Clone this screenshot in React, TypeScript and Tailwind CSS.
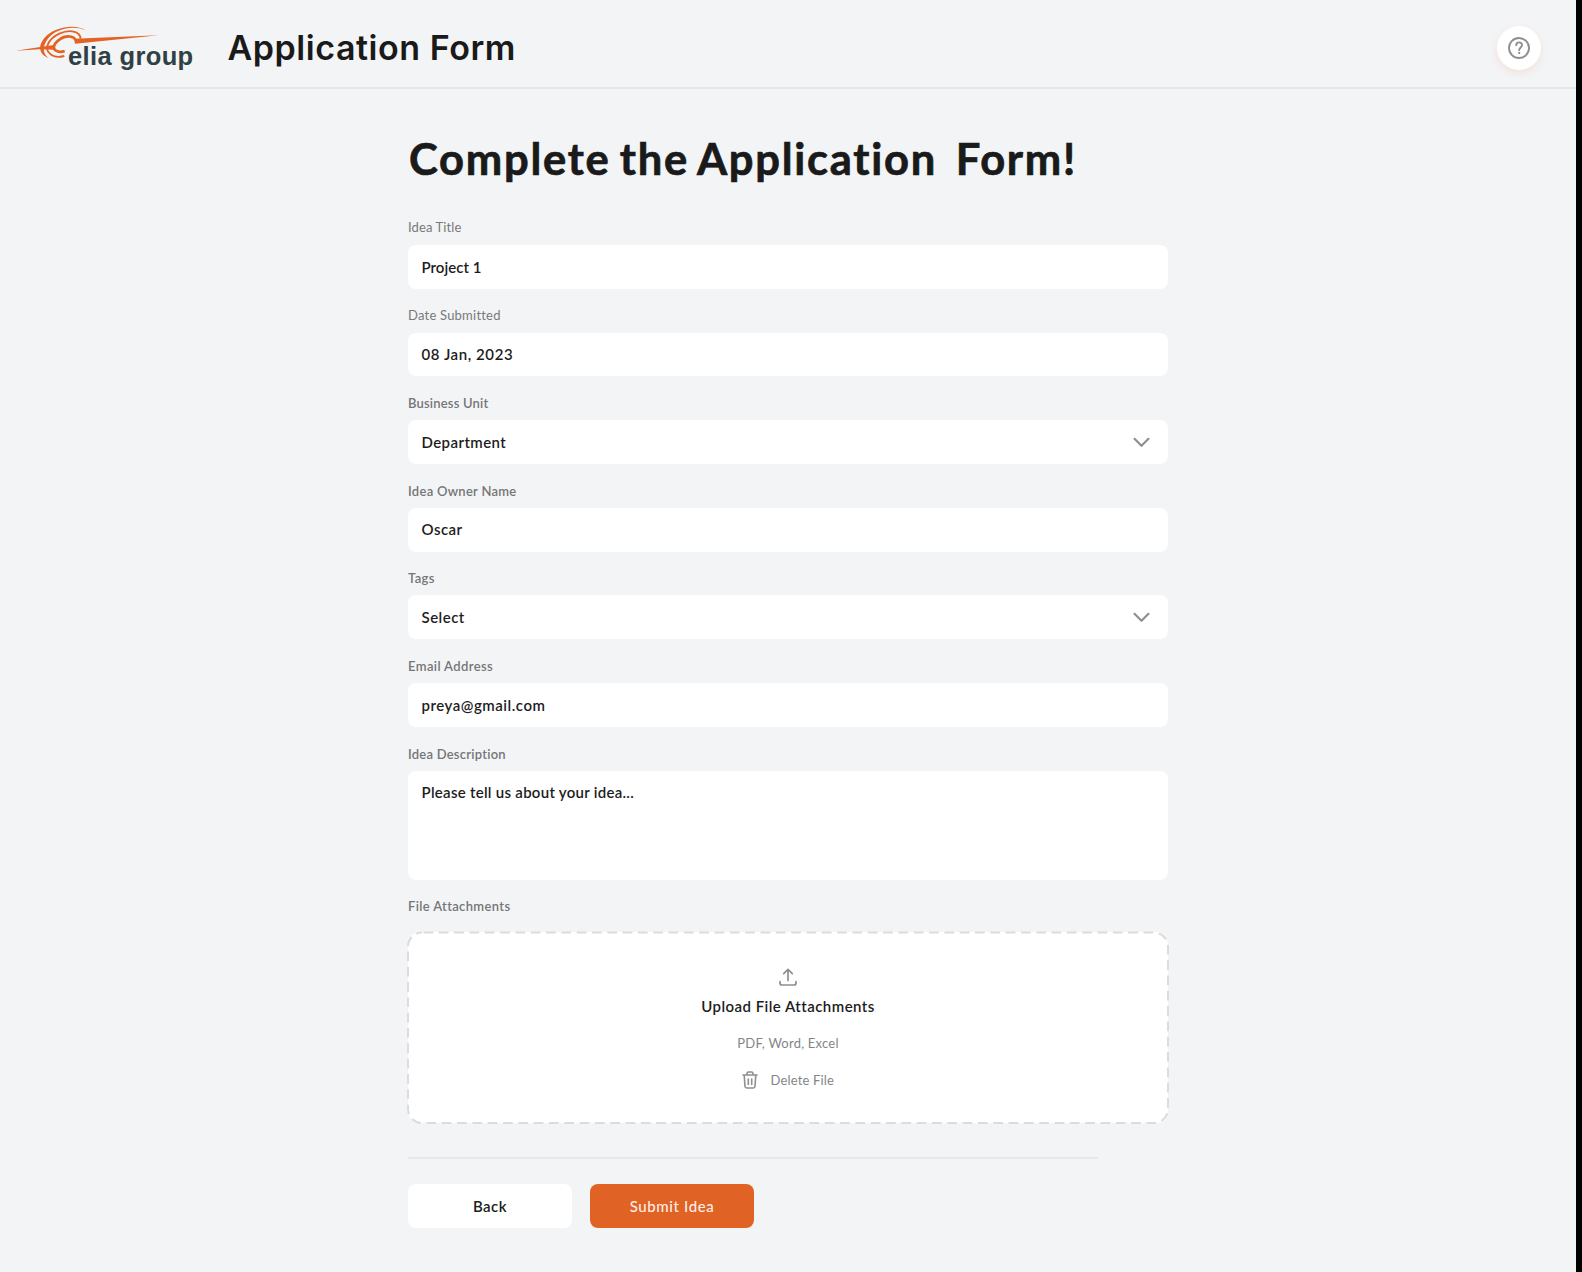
import type { ReactNode } from "react";

function Logo() {
  return (
    <svg className="absolute inset-0 h-full w-full" viewBox="45 72 540 144" fill="none">
      <g fill="#e36224">
        <path d="M46 152.500 L166 134 L163 149 L118 148 Z" />
        <path d="M222 116 L476 105.500 L225 131.500 Z" />
        <path d="M257 91 C228 70 160 80 133 114 C110 142 121 166 146 174 C128 161 126 141 143 117 C166 87 218 74 257 91 Z" />
      </g>
      <path d="M242 116 C240 92 208 88 178 101 C146 116 131 145 149 160 C160 171 178 172 193 168" stroke="#e36224" strokeWidth="5.500" />
      <path d="M226 120 C222 106 195 106 178 119 C160 132 157 146 168 152 C176 157 185 156 194 153" stroke="#e36224" strokeWidth="8" />
    </svg>
  );
}

function Chevron() {
  return (
    <svg className="h-4 w-6" viewBox="0 0 24 16" fill="none" stroke="#8f8f8f" strokeWidth="2.200" strokeLinecap="round" strokeLinejoin="round">
      <path d="M4.500 4.800 L11.500 11.800 L18.500 4.800" />
    </svg>
  );
}

function HelpIcon() {
  return (
    <svg className="size-[22px]" viewBox="0 0 22 22" fill="none" stroke="#8f8f8f" strokeWidth="1.900">
      <circle cx="11" cy="11" r="10" />
      <path d="M8.200 8.300 C8.200 4.400 14 4.400 14 8 C14 10.600 11.200 10.400 11.200 13.200" strokeLinecap="round" />
      <path d="M11.200 15 V17" />
    </svg>
  );
}

function UploadIcon() {
  return (
    <svg className="h-[18px] w-[18px]" viewBox="0 0 18 18" fill="none" stroke="#8f8f8f" strokeWidth="1.700" strokeLinecap="round" strokeLinejoin="round">
      <path d="M9 12.500 V1.500 M4.700 5.700 L9 1.400 L13.300 5.700" />
      <path d="M1 13.500 V15 Q1 17 3 17 H15 Q17 17 17 15 V13.500" />
    </svg>
  );
}

function TrashIcon() {
  return (
    <svg className="h-[18px] w-4" viewBox="0 0 16 18" fill="none" stroke="#8f8f8f" strokeWidth="1.600" strokeLinecap="round" strokeLinejoin="round">
      <path d="M1 4 H15 M2.200 4 L3 15.300 Q3.100 17 4.700 17 H11.300 Q12.900 17 13 15.300 L13.800 4 M5 4 V2.500 Q5 1 6.500 1 H9.500 Q11 1 11 2.500 V4" />
      <path d="M6.300 8 V13.500 M9.700 8 V13.500" />
    </svg>
  );
}

function Label({ children, bold }: { children: ReactNode; bold?: boolean }) {
  return (
    <div className={bold ? "h-6 text-[13px] leading-[14px] font-semibold text-[#747677]" : "h-6 text-[13px] leading-[13px] text-[#77797a]"}>
      {children}
    </div>
  );
}

type FieldProps = { label: string; labelClass: string; value: string; valueClass: string; bold?: boolean; select?: boolean };

function Field({ label, labelClass, value, valueClass, bold, select }: FieldProps) {
  return (
    <div className="mb-[19.800px]">
      <Label bold={bold}>
        <span className={labelClass}>{label}</span>
      </Label>
      <div className="flex h-[43.800px] items-center justify-between rounded-lg bg-white pr-[14px] pl-[13.500px] text-[15px] font-semibold text-[#1d1d1d]">
        <span className={valueClass}>{value}</span>
        {select && <Chevron />}
      </div>
    </div>
  );
}

const fields: FieldProps[] = [
  { label: "Idea Title", labelClass: "tracking-[0.12px]", value: "Project 1", valueClass: "tracking-[0.03px]" },
  { label: "Date Submitted", labelClass: "tracking-[0.22px]", value: "08 Jan, 2023", valueClass: "tracking-[0.58px]" },
  { label: "Business Unit", labelClass: "tracking-[0.18px]", value: "Department", valueClass: "tracking-[0.42px]", bold: true, select: true },
  { label: "Idea Owner Name", labelClass: "tracking-[0.28px]", value: "Oscar", valueClass: "tracking-[0.45px]", bold: true },
  { label: "Tags", labelClass: "tracking-[0.350px]", value: "Select", valueClass: "tracking-[0.48px]", bold: true, select: true },
  { label: "Email Address", labelClass: "tracking-[0.380px]", value: "preya@gmail.com", valueClass: "tracking-[0.52px]", bold: true },
];

export default function App() {
  return (
    <div className="h-[1272px] w-[1582px] overflow-hidden border-r-[6px] border-black bg-[#f3f4f6] font-['Lato',sans-serif] text-[#1a1a1a] [font-variant-ligatures:none]">
      <header className="flex h-[89px] items-center border-b-2 border-[#e6e7e9] pt-[9px]">
        <div className="relative ml-[15px] h-12 w-[180px]">
          <Logo />
          <div className="absolute top-[18px] left-[53px] text-[25.500px] leading-7 font-bold tracking-[0.370px] whitespace-nowrap text-[#2f4144] font-['Liberation_Sans',sans-serif]">elia group</div>
        </div>
        <h1 className="ml-[32.500px] pb-px text-[34px] font-semibold tracking-[0.55px] font-['Inter',sans-serif]">Application Form</h1>
        <div className="mr-[35px] ml-auto flex size-11 items-center justify-center rounded-full bg-white shadow-[0_3px_8px_rgba(227,98,36,0.12)]">
          <HelpIcon />
        </div>
      </header>
      <main className="ml-[408px] w-[760px]">
        <h2 className="h-[132px] pt-[42px] pl-px text-[43.500px] leading-[54px] font-bold tracking-[1.750px] whitespace-pre [word-spacing:-3px] [-webkit-text-stroke:0.7px_#1a1a1a]">Complete the Application  Form!</h2>
        {fields.map((f) => (
          <Field key={f.label} {...f} />
        ))}
        <Label bold>
          <span className="tracking-[0.230px]">Idea Description</span>
        </Label>
        <div className="mb-[19.800px] h-[109px] rounded-lg bg-white pt-[12px] pl-[13.500px] text-[15px] leading-[18px] font-semibold text-[#1d1d1d]">
          <span className="tracking-[0.280px]">Please tell us about your idea...</span>
        </div>
        <Label bold>
          <span className="tracking-[0.350px]">File Attachments</span>
        </Label>
        <div className="relative mt-[9px] flex h-[191px] flex-col items-center rounded-xl bg-white pt-[35.500px]">
          <svg className="absolute -top-px -left-px h-[193px] w-[762px]" viewBox="0 0 762 193" fill="none" stroke="#dcdcdc" strokeWidth="2">
            <rect x="1" y="1.500" width="760" height="190.500" rx="14" strokeDasharray="9.700 5.620" strokeDashoffset="-1.500" />
          </svg>
          <UploadIcon />
          <div className="mt-[10px] text-[15px] leading-5 font-semibold tracking-[0.460px] text-[#1d1d1d]">Upload File Attachments</div>
          <div className="mt-[17px] text-[13px] leading-5 tracking-[0.220px] text-[#858585]">PDF, Word, Excel</div>
          <div className="mt-[17px] flex items-center gap-[12.500px] text-[13px] leading-5 tracking-[0.150px] text-[#858585]">
            <TrashIcon />
            <span>Delete File</span>
          </div>
        </div>
        <div className="mt-[34px] h-0.5 w-[690px] bg-[#e6e7e9]" />
        <div className="mt-[24.500px] flex gap-[18px] text-[15px] font-semibold tracking-[0.500px]">
          <button className="h-[43.800px] w-[164px] rounded-lg bg-white text-[#1d1d1d]">Back</button>
          <button className="h-[43.800px] w-[164px] rounded-lg bg-[#e06225] font-medium tracking-[0.600px] text-[#fdeee6]">Submit Idea</button>
        </div>
      </main>
    </div>
  );
}
